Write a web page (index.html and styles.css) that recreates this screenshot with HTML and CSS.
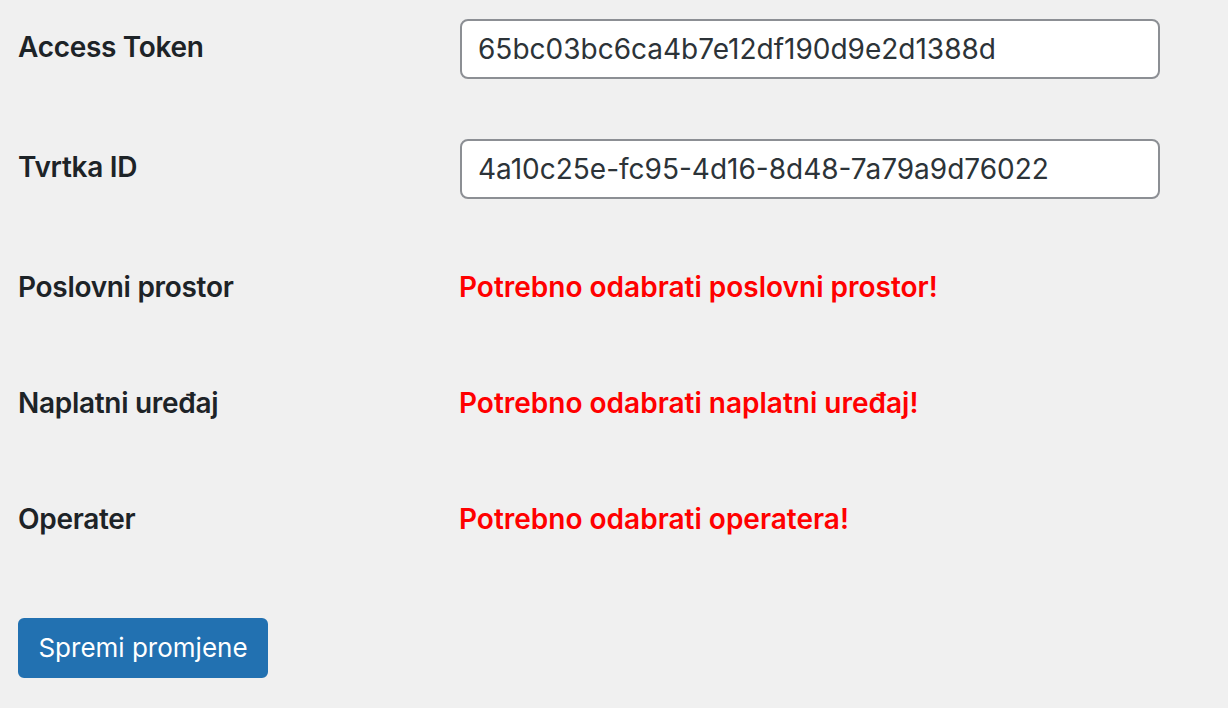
FILE: index.html
```html
<!DOCTYPE html>
<html lang="hr">
<head>
<meta charset="utf-8">
<title>Postavke</title>
<link rel="stylesheet" href="styles.css">
</head>
<body>
<form class="settings">
  <div class="row row-first">
    <div class="label">Access Token</div>
    <div class="field"><input class="text-input" type="text" value="65bc03bc6ca4b7e12df190d9e2d1388d"></div>
  </div>
  <div class="row">
    <div class="label">Tvrtka ID</div>
    <div class="field"><input class="text-input" type="text" value="4a10c25e-fc95-4d16-8d48-7a79a9d76022"></div>
  </div>
  <div class="row">
    <div class="label">Poslovni prostor</div>
    <div class="field field-text"><span class="error">Potrebno odabrati poslovni prostor!</span></div>
  </div>
  <div class="row">
    <div class="label">Naplatni uređaj</div>
    <div class="field field-text"><span class="error">Potrebno odabrati naplatni uređaj!</span></div>
  </div>
  <div class="row">
    <div class="label">Operater</div>
    <div class="field field-text"><span class="error">Potrebno odabrati operatera!</span></div>
  </div>
  <div class="submit">
    <button type="button" class="button-primary">Spremi promjene</button>
  </div>
</form>
</body>
</html>
```

FILE: styles.css
```css
html, body {
  margin: 0;
  padding: 0;
  background: #f0f0f0;
  overflow: hidden;
}

body {
  font-family: Inter, "Noto Sans", "Liberation Sans", sans-serif;
  color: #1d2327;
  font-size: 28px;
  line-height: 36px;
}

.settings {
  padding-left: 18px;
}

.row {
  display: flex;
  align-items: flex-start;
}

.row-first {
  margin-top: -11px;
}

.label {
  width: 440px;
  flex: none;
  padding: 40px 0 40px 0;
  font-weight: 600;
  line-height: 36px;
  letter-spacing: -0.3px;
}

.field {
  padding: 30px 0;
}

.field-text {
  padding-top: 40px;
}

.text-input {
  box-sizing: border-box;
  width: 700px;
  height: 60px;
  margin: 0 0 0 2px;
  padding: 0 16px;
  border: 2px solid #8c8f94;
  border-radius: 8px;
  background: #fff;
  color: #2c3338;
  font-family: Inter, "Noto Sans", "Liberation Sans", sans-serif;
  font-size: 28px;
  line-height: 40px;
  outline: none;
}

.error {
  color: #ff0000;
  font-weight: 600;
  margin-left: 1px;
}

.submit {
  padding-top: 41px;
}

.button-primary {
  box-sizing: border-box;
  width: 250px;
  height: 60px;
  padding: 0 10px;
  border: 2px solid #2271b1;
  border-radius: 6px;
  background: #2271b1;
  color: #fff;
  font-family: Inter, "Noto Sans", "Liberation Sans", sans-serif;
  font-size: 26px;
  line-height: 56px;
  white-space: nowrap;
  cursor: pointer;
}
```
